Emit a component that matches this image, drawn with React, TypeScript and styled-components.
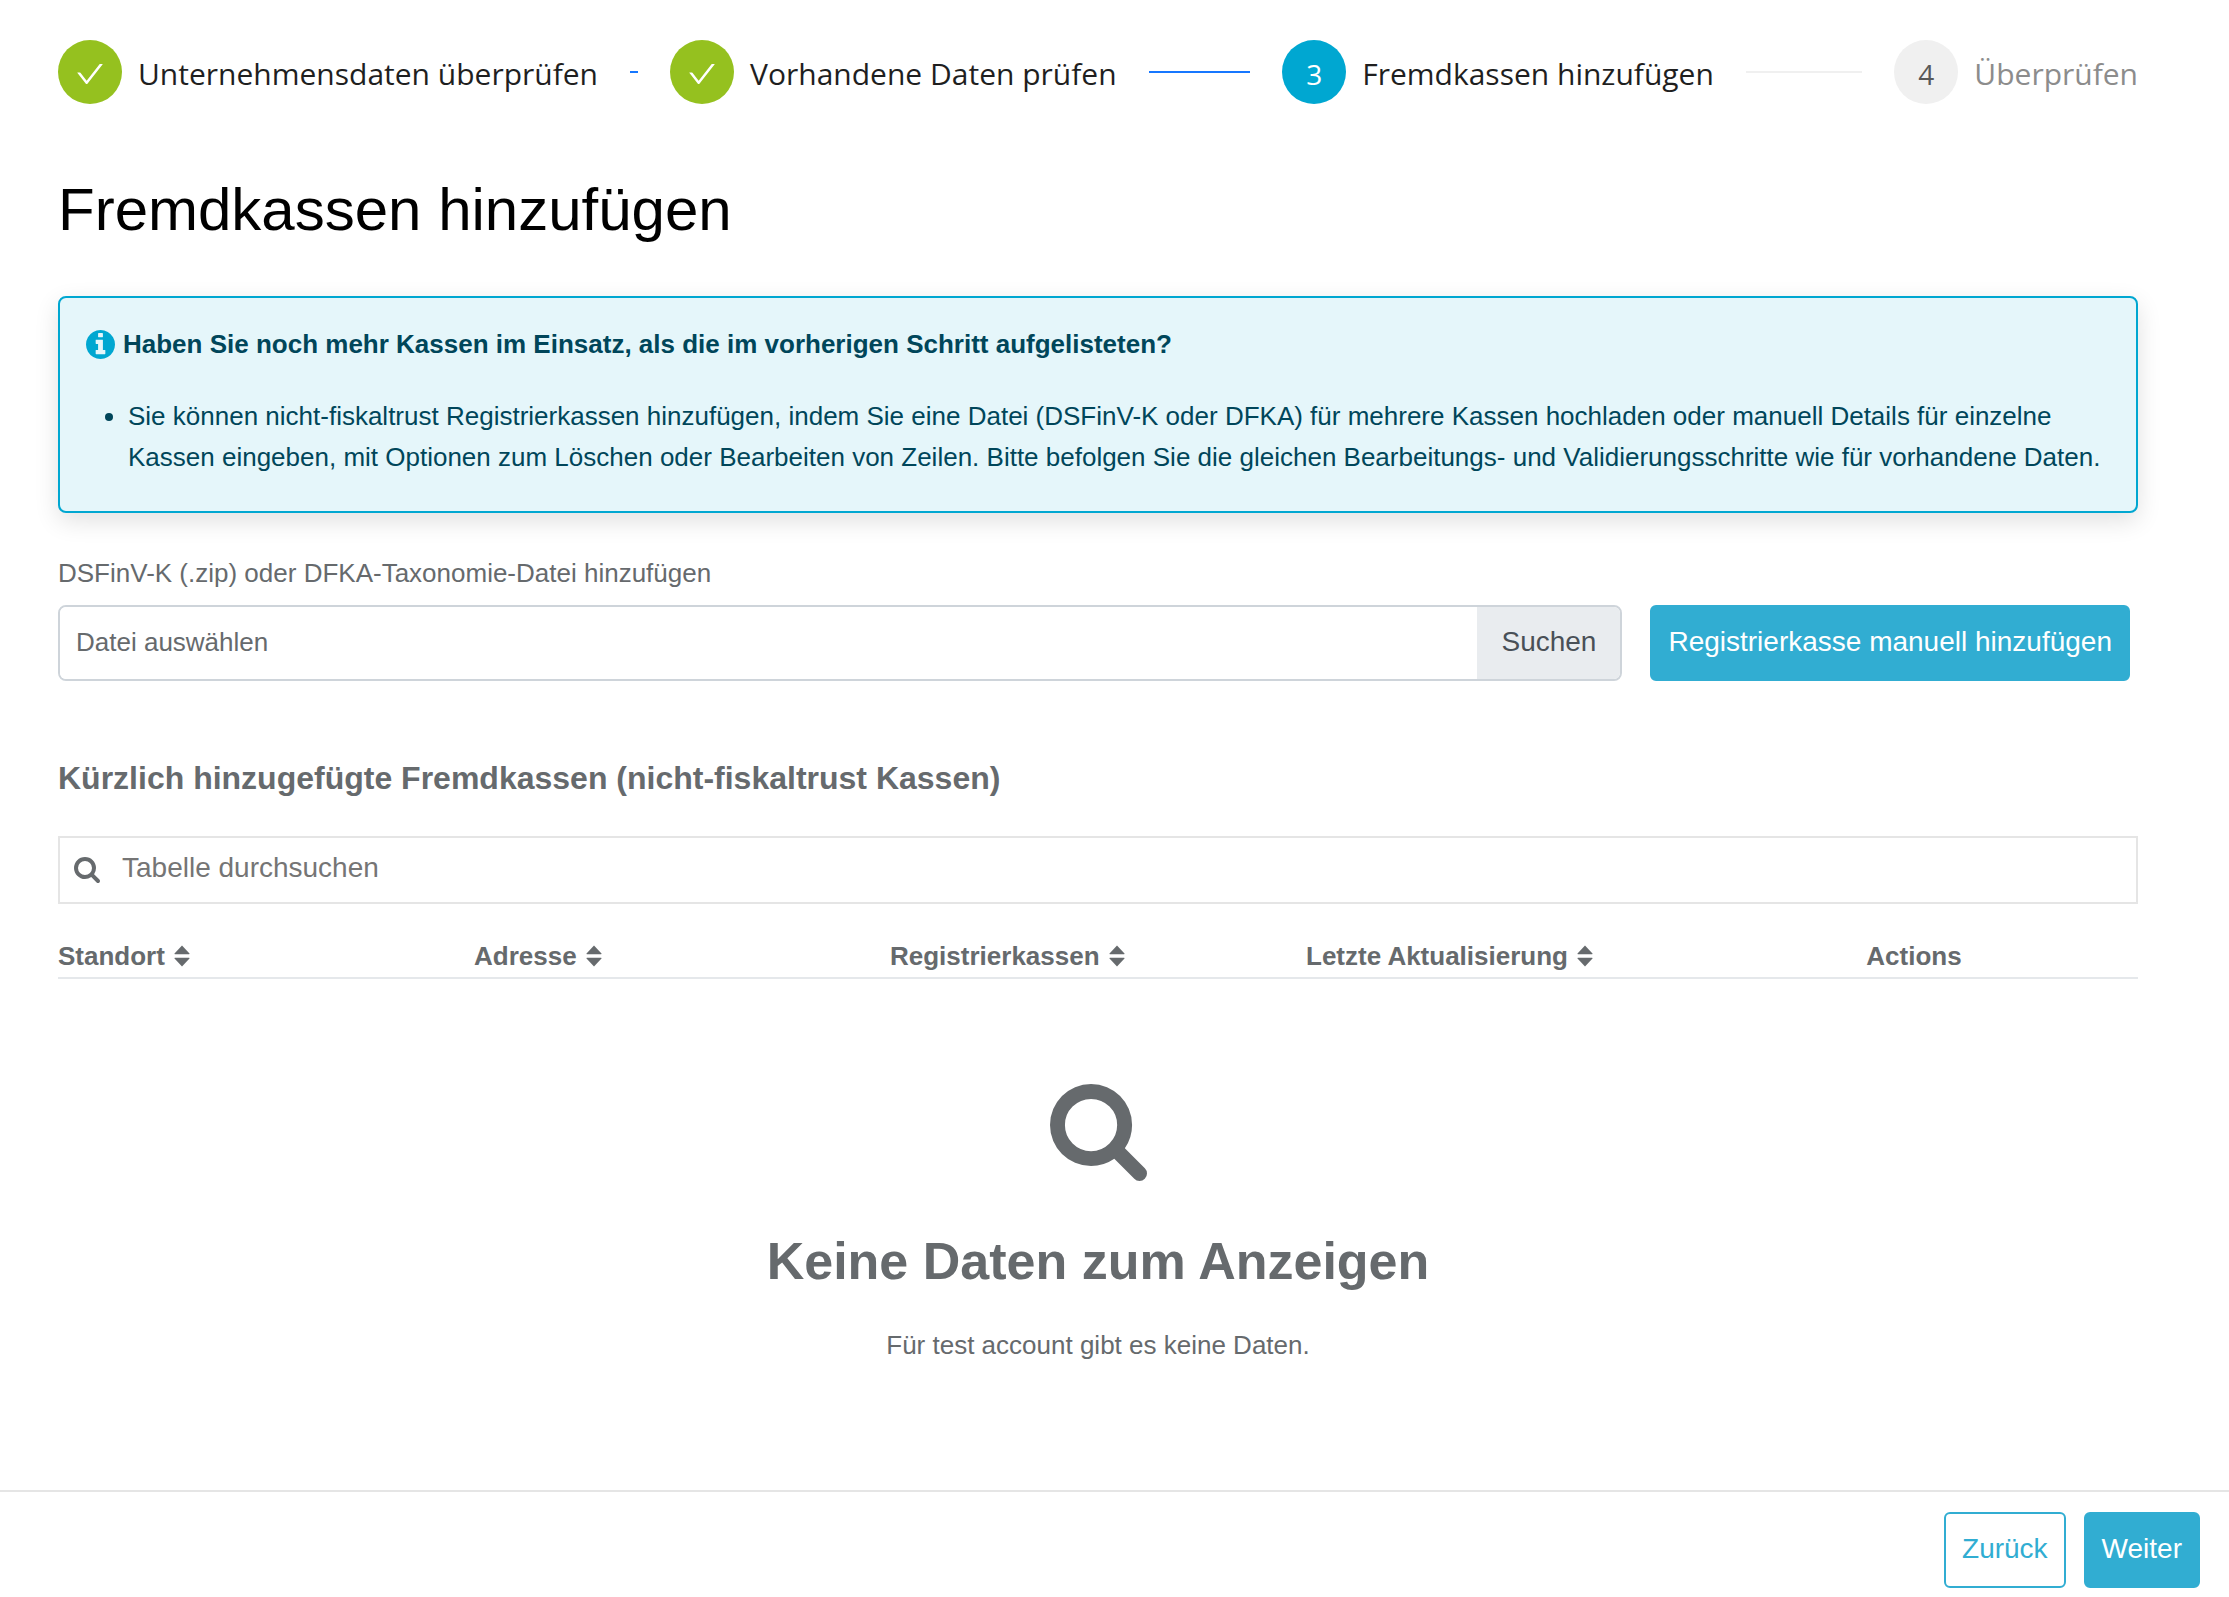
import React from "react";
import styled, { createGlobalStyle, css } from "styled-components";

const GlobalStyle = createGlobalStyle`
  *, *::before, *::after { box-sizing: border-box; }
  body {
    margin: 0;
    background: #fff;
    color: #666a6d;
    font-family: "Liberation Sans", Arial, sans-serif;
    font-size: 26px;
    line-height: 40px;
  }
  button, input { font: inherit; }
`;

const Page = styled.div`
  display: flex;
  flex-direction: column;
  min-height: 100vh;
`;

const Main = styled.main`
  padding: 40px 91px 40px 58px;
`;

type StepState = "done" | "active" | "waiting";

const Steps = styled.ol`
  display: flex;
  gap: 32px;
  margin: 0;
  padding: 0;
  list-style: none;
  font-family: "Open Sans", "Noto Sans", sans-serif;
`;

const Step = styled.li<{ $last: boolean }>`
  display: flex;
  align-items: center;
  flex: ${(p) => (p.$last ? "none" : "1 1 0")};
  min-width: 0;
`;

const circleColors = {
  done: css`background: #95c11f; color: #fff;`,
  active: css`background: #00a7d1; color: #fff;`,
  waiting: css`background: #f0f0f0; color: #595959;`,
};

const Circle = styled.span<{ $state: StepState }>`
  display: flex;
  align-items: center;
  justify-content: center;
  flex: none;
  width: 64px;
  height: 64px;
  margin-right: 16px;
  padding-top: 3px;
  border-radius: 50%;
  font-size: 28px;
  ${(p) => circleColors[p.$state]}
`;

const StepTitle = styled.span<{ $state: StepState }>`
  padding-top: 3px;
  font-size: 30px;
  line-height: 60px;
  white-space: nowrap;
  color: ${(p) => (p.$state === "waiting" ? "#8c8c8c" : "#1f1f1f")};
`;

const StepLine = styled.span<{ $done: boolean }>`
  flex: 1;
  height: 2px;
  margin-left: 32px;
  background: ${(p) => (p.$done ? "#1677ff" : "#f0f0f0")};
`;

const Title = styled.h1`
  margin: 64px 0 44px;
  color: #000;
  font-size: 60px;
  font-weight: 400;
  line-height: 84px;
`;

const Notice = styled.section`
  padding: 26px 26px 33px;
  border: 2px solid #00a7d1;
  border-radius: 8px;
  background: #e5f6fa;
  color: #00465a;
  line-height: 41px;
  box-shadow: 0 8px 24px rgba(0, 0, 0, 0.12);
`;

const NoticeTitle = styled.h2`
  display: flex;
  align-items: center;
  gap: 8px;
  margin: 0 0 32px;
  font-size: 26px;
  line-height: 40px;
  svg { color: #00a7d1; }
`;

const NoticeList = styled.ul`
  margin: 0;
  padding-left: 42px;
`;

const UploadRow = styled.div`
  display: flex;
  align-items: flex-end;
  gap: 28px;
  margin-top: 40px;
  padding-right: 8px;
`;

const UploadField = styled.div`
  flex: 1;
  min-width: 0;
`;

const UploadLabel = styled.label`
  display: block;
  margin-bottom: 12px;
`;

const FileBox = styled.div`
  display: flex;
  height: 76px;
  overflow: hidden;
  border: 2px solid #ced4da;
  border-radius: 8px;
`;

const FileName = styled.input`
  flex: 1;
  min-width: 0;
  padding: 0 16px 2px;
  border: 0;
  background: #fff;
  color: inherit;
  &::placeholder { color: #666a6d; opacity: 1; }
`;

const BrowseButton = styled.button`
  padding: 0 24px 2px;
  border: 0;
  background: #e9ecef;
  color: #495057;
  font-size: 28px;
`;

const Button = styled.button<{ $outline?: boolean }>`
  height: 76px;
  padding: 0 16px 2px;
  border: 2px solid #31add2;
  border-radius: 6px;
  background: ${(p) => (p.$outline ? "#fff" : "#31add2")};
  color: ${(p) => (p.$outline ? "#31add2" : "#fff")};
  font-size: 28px;
  white-space: nowrap;
`;

const SectionTitle = styled.h2`
  margin: 77px 0 38px;
  font-size: 32px;
  line-height: 40px;
`;

const SearchBox = styled.label`
  display: flex;
  align-items: center;
  gap: 22px;
  height: 68px;
  padding: 0 14px;
  border: 2px solid #e5e5e5;
  svg { flex: none; }
`;

const SearchInput = styled.input`
  flex: 1;
  min-width: 0;
  padding: 0 0 4px;
  border: 0;
  outline: 0;
  background: transparent;
  font-size: 28px;
  &::placeholder { color: #757575; opacity: 1; }
`;

const Table = styled.table`
  width: 100%;
  margin-top: 32px;
  border-collapse: collapse;
  table-layout: fixed;
`;

const HeadCell = styled.th<{ $center?: boolean }>`
  padding: 0 ${(p) => (p.$center ? "32px" : "0")} 1px 0;
  border-bottom: 2px solid #e5e8eb;
  text-align: ${(p) => (p.$center ? "center" : "left")};
`;

const SortButton = styled.button`
  display: inline-flex;
  align-items: center;
  gap: 9px;
  padding: 0;
  border: 0;
  background: none;
  color: inherit;
  font-weight: 700;
`;

const EmptyCell = styled.td`
  padding: 105px 0 0;
  text-align: center;
  svg { display: block; margin: 0 auto; }
`;

const EmptyTitle = styled.h3`
  margin: 48px 0 32px;
  font-size: 52px;
  line-height: 64px;
`;

const EmptyText = styled.p`
  margin: 0;
`;

const Footer = styled.footer`
  display: flex;
  justify-content: flex-end;
  gap: 18px;
  margin-top: auto;
  padding: 20px 29px 9px;
  border-top: 2px solid #e5e5e5;
`;

const CheckIcon = () => (
  <svg width="32" height="32" viewBox="0 0 1024 1024" fill="currentColor" aria-hidden="true">
    <path d="M912 190h-69.900c-9.800 0-19.100 4.500-25.100 12.200L404.700 724.500 207 474a32 32 0 0 0-25.100-12.200H112c-6.700 0-10.400 7.700-6.300 12.900l273.900 347c12.800 16.200 37.400 16.200 50.300 0l488.400-618.900c4.100-5.100.4-12.800-6.300-12.800z" />
  </svg>
);

const SearchIcon = ({ size }: { size: number }) => (
  <svg width={size} height={size} viewBox="0 128 1664 1664" fill="currentColor" aria-hidden="true">
    <path d="M1152 832q0-185-131.500-316.500T704 384 387.500 515.500 256 832t131.500 316.500T704 1280t316.500-131.500T1152 832zm512 832q0 52-38 90t-90 38q-54 0-90-38l-343-342q-179 124-399 124-143 0-273.500-55.500t-225-150-150-225T0 832t55.500-273.500 150-225 225-150T704 128t273.500 55.500 225 150 150 225T1408 832q0 220-124 399l343 343q37 37 37 90z" />
  </svg>
);

const InfoIcon = () => (
  <svg width="29" height="29" viewBox="0 128 1536 1536" fill="currentColor" aria-hidden="true">
    <path d="M1024 1376v-160q0-14-9-23t-23-9h-96V672q0-14-9-23t-23-9H544q-14 0-23 9t-9 23v160q0 14 9 23t23 9h96v320h-96q-14 0-23 9t-9 23v160q0 14 9 23t23 9h448q14 0 23-9t9-23zM896 480V320q0-14-9-23t-23-9H672q-14 0-23 9t-9 23v160q0 14 9 23t23 9h192q14 0 23-9t9-23zm640 416q0 209-103 385.500T1153.500 1561 768 1664t-385.500-103T103 1281.500 0 896t103-385.500T382.500 231 768 128t385.500 103T1433 510.500 1536 896z" />
  </svg>
);

const SortIcon = () => (
  <svg width="16" height="22" viewBox="0 0 16 22" fill="currentColor" aria-hidden="true">
    <path d="M8 0.500 15.500 8.500q.3.700-.5.700H1q-.8 0-.5-.7zM8 21.500 15.500 13.500q.3-.7-.5-.7H1q-.8 0-.5.7z" />
  </svg>
);

const steps: { title: string; state: StepState }[] = [
  { title: "Unternehmensdaten überprüfen", state: "done" },
  { title: "Vorhandene Daten prüfen", state: "done" },
  { title: "Fremdkassen hinzufügen", state: "active" },
  { title: "Überprüfen", state: "waiting" },
];

const columns = ["Standort", "Adresse", "Registrierkassen", "Letzte Aktualisierung"];

export default function App() {
  return (
    <Page>
      <GlobalStyle />
      <Main>
        <Steps>
          {steps.map((step, i) => {
            const last = i === steps.length - 1;
            return (
              <Step key={step.title} $last={last}>
                <Circle $state={step.state}>{step.state === "done" ? <CheckIcon /> : i + 1}</Circle>
                <StepTitle $state={step.state}>{step.title}</StepTitle>
                {!last && <StepLine $done={step.state === "done"} />}
              </Step>
            );
          })}
        </Steps>

        <Title>Fremdkassen hinzufügen</Title>

        <Notice>
          <NoticeTitle>
            <InfoIcon />
            Haben Sie noch mehr Kassen im Einsatz, als die im vorherigen Schritt aufgelisteten?
          </NoticeTitle>
          <NoticeList>
            <li>
              Sie können nicht-fiskaltrust Registrierkassen hinzufügen, indem Sie eine Datei (DSFinV-K oder DFKA) für
              mehrere Kassen hochladen oder manuell Details für einzelne Kassen eingeben, mit Optionen zum Löschen oder
              Bearbeiten von Zeilen. Bitte befolgen Sie die gleichen Bearbeitungs- und Validierungsschritte wie für
              vorhandene Daten.
            </li>
          </NoticeList>
        </Notice>

        <UploadRow>
          <UploadField>
            <UploadLabel htmlFor="file-name">DSFinV-K (.zip) oder DFKA-Taxonomie-Datei hinzufügen</UploadLabel>
            <FileBox>
              <FileName id="file-name" type="text" placeholder="Datei auswählen" readOnly />
              <BrowseButton type="button">Suchen</BrowseButton>
            </FileBox>
          </UploadField>
          <Button type="button">Registrierkasse manuell hinzufügen</Button>
        </UploadRow>

        <SectionTitle>Kürzlich hinzugefügte Fremdkassen (nicht-fiskaltrust Kassen)</SectionTitle>

        <SearchBox>
          <SearchIcon size={26} />
          <SearchInput type="text" placeholder="Tabelle durchsuchen" />
        </SearchBox>

        <Table>
          <thead>
            <tr>
              {columns.map((column) => (
                <HeadCell key={column} scope="col">
                  <SortButton type="button">
                    {column}
                    <SortIcon />
                  </SortButton>
                </HeadCell>
              ))}
              <HeadCell scope="col" $center>
                Actions
              </HeadCell>
            </tr>
          </thead>
          <tbody>
            <tr>
              <EmptyCell colSpan={5}>
                <SearchIcon size={97} />
                <EmptyTitle>Keine Daten zum Anzeigen</EmptyTitle>
                <EmptyText>Für test account gibt es keine Daten.</EmptyText>
              </EmptyCell>
            </tr>
          </tbody>
        </Table>
      </Main>

      <Footer>
        <Button type="button" $outline>
          Zurück
        </Button>
        <Button type="button">Weiter</Button>
      </Footer>
    </Page>
  );
}
